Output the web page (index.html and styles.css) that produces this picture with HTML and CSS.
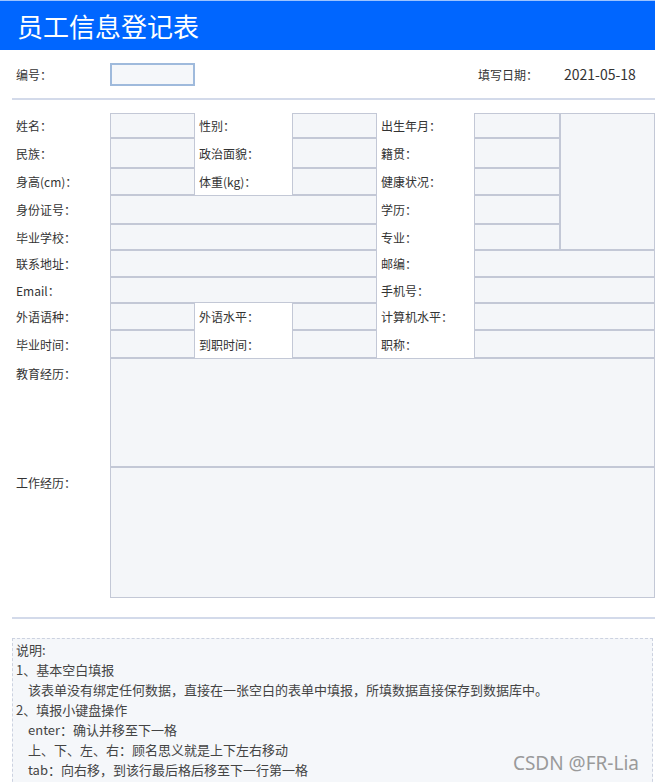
FILE: index.html
```html
<!DOCTYPE html>
<html lang="zh-CN">
<head>
  <meta charset="UTF-8">
  <meta name="viewport" content="width=device-width, initial-scale=1.0">
  <title>员工信息登记表</title>
  <link rel="stylesheet" href="styles.css">
</head>
<body>
  <div class="title-bar">员工信息登记表</div>

  <div class="page">
    <div class="grid top-row">
      <div class="label">编号：</div>
      <div class="no-box"></div>
      <div class="label date-label">填写日期：</div>
      <div class="label date-value">2021-05-18</div>
    </div>

    <div class="divider"></div>

    <div class="grid form-grid">
      <div class="label">姓名：</div>
      <div class="cell"></div>
      <div class="label">性别：</div>
      <div class="cell"></div>
      <div class="label">出生年月：</div>
      <div class="cell"></div>
      <div class="cell photo"></div>

      <div class="label">民族：</div>
      <div class="cell"></div>
      <div class="label">政治面貌：</div>
      <div class="cell"></div>
      <div class="label">籍贯：</div>
      <div class="cell"></div>

      <div class="label">身高(cm)：</div>
      <div class="cell"></div>
      <div class="label">体重(kg)：</div>
      <div class="cell"></div>
      <div class="label">健康状况：</div>
      <div class="cell"></div>

      <div class="label">身份证号：</div>
      <div class="cell span3"></div>
      <div class="label">学历：</div>
      <div class="cell"></div>

      <div class="label">毕业学校：</div>
      <div class="cell span3"></div>
      <div class="label">专业：</div>
      <div class="cell"></div>

      <div class="label">联系地址：</div>
      <div class="cell span3"></div>
      <div class="label">邮编：</div>
      <div class="cell span2"></div>

      <div class="label">Email：</div>
      <div class="cell span3"></div>
      <div class="label">手机号：</div>
      <div class="cell span2"></div>

      <div class="label">外语语种：</div>
      <div class="cell"></div>
      <div class="label">外语水平：</div>
      <div class="cell"></div>
      <div class="label">计算机水平：</div>
      <div class="cell span2"></div>

      <div class="label">毕业时间：</div>
      <div class="cell"></div>
      <div class="label">到职时间：</div>
      <div class="cell"></div>
      <div class="label">职称：</div>
      <div class="cell span2"></div>

      <div class="label tall">教育经历：</div>
      <div class="cell span6"></div>

      <div class="label tall">工作经历：</div>
      <div class="cell span6"></div>
    </div>

    <div class="divider bottom"></div>

    <div class="notes">
      <div>说明:</div>
      <div>1、基本空白填报</div>
      <div class="indent">该表单没有绑定任何数据，直接在一张空白的表单中填报，所填数据直接保存到数据库中。</div>
      <div>2、填报小键盘操作</div>
      <div class="indent">enter：确认并移至下一格</div>
      <div class="indent">上、下、左、右：顾名思义就是上下左右移动</div>
      <div class="indent">tab：向右移，到该行最后格后移至下一行第一格</div>
    </div>
  </div>

  <div class="watermark">CSDN @FR-Lia</div>
</body>
</html>
```

FILE: styles.css
```css
body {
  margin: 0;
  font-family: "Noto Sans CJK SC", "Noto Sans", sans-serif;
  font-size: 12px;
  color: #333;
  background: #fff;
  height: 782px;
  overflow: hidden;
  position: relative;
}
.title-bar {
  height: 50px;
  line-height: 50px;
  background: #0066ff;
  color: #fff;
  font-size: 26px;
  padding-left: 17px;
  border-top: 1px solid #9cc3ff;
  box-sizing: border-box;
}
.page {
  margin-left: 12px;
}
.grid {
  display: grid;
  grid-template-columns: 98px 85px 97px 85px 97px 86px 95px;
}
.top-row {
  height: 48px;
  align-items: center;
}
.no-box {
  height: 23px;
  border: 2px solid #9fbadc;
  background: #f5f7fa;
  box-sizing: border-box;
}
.date-label {
  grid-column: 6;
}
.date-value {
  grid-column: 7;
  font-size: 14px;
}
.label {
  padding-left: 4px;
  display: flex;
  align-items: center;
  white-space: nowrap;
}
.label.tall {
  align-items: flex-start;
  padding-top: 7px;
}
.divider {
  height: 2px;
  background: #d3daea;
}
.form-grid {
  margin-top: 13px;
  grid-template-rows: 25px 30px 27px 29px 26px 27px 26px 27px 28px 109px 131px;
}
.cell {
  background: #f4f6f9;
  border: 1px solid #c3c8d6;
  box-sizing: border-box;
}
.photo {
  grid-row: span 5;
}
.span2 {
  grid-column: span 2;
}
.span3 {
  grid-column: span 3;
}
.span6 {
  grid-column: span 6;
}
.divider.bottom {
  margin-top: 19px;
}
.notes {
  margin-top: 19px;
  margin-right: 2px;
  border: 1px dashed #ccd2e0;
  background: #f5f7fa;
  padding: 1px 3px 6px;
  font-size: 13px;
  line-height: 20px;
  color: #444;
  height: 160px;
}
.notes .indent {
  padding-left: 12px;
}
.watermark {
  position: absolute;
  right: 16px;
  bottom: 6px;
  font-family: "Noto Sans", sans-serif;
  font-size: 19px;
  color: #9a9a9a;
}
```
